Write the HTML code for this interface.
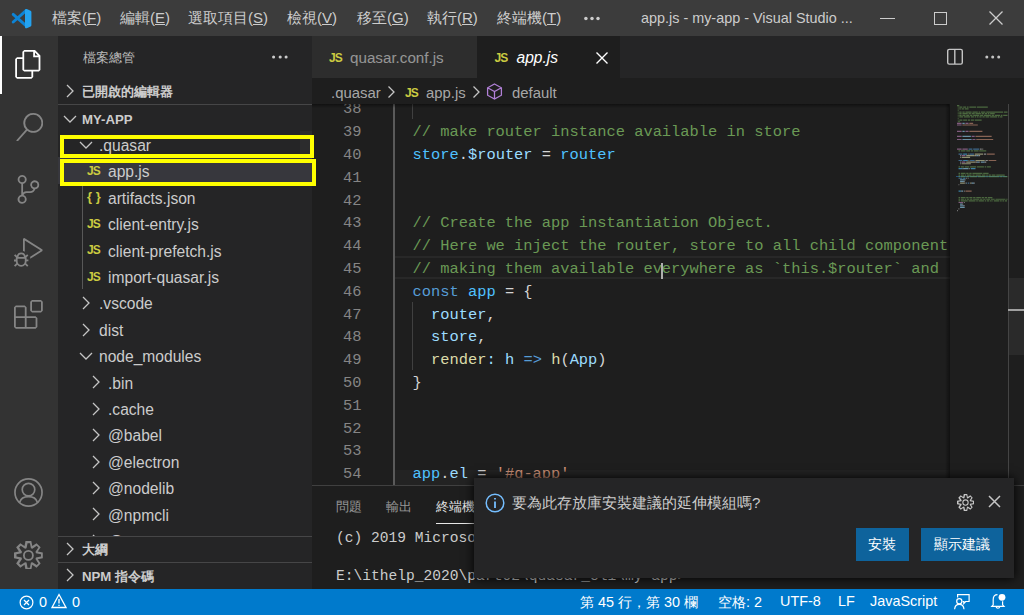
<!DOCTYPE html>
<html><head><meta charset="utf-8">
<style>
*{margin:0;padding:0;box-sizing:border-box}
html,body{width:1024px;height:615px;overflow:hidden;background:#1e1e1e;font-family:"Liberation Sans",sans-serif;}
.a{position:absolute;white-space:nowrap}
#title{left:0;top:0;width:1024px;height:36px;background:#3c3c3c;color:#cccccc;font-size:15px}
#title .m{position:absolute;top:9px}
#act{left:0;top:36px;width:58px;height:553px;background:#333333}
#act svg{position:absolute}
#side{left:58px;top:36px;width:254px;height:553px;background:#252526;color:#cccccc;font-size:15.6px;overflow:hidden}
.row{position:absolute;left:0;width:254px;height:26.4px}
.row.sel{background:#37373d}
.row .t{position:absolute;top:6.2px;white-space:nowrap}
.chev{fill:none;stroke:#c5c5c5;stroke-width:1.3}
.js{color:#cbcb41;font-weight:bold;font-size:12px;letter-spacing:-0.8px;font-family:"Liberation Sans",sans-serif}
.jsn{color:#cbcb41;font-weight:bold;font-size:13px}
.hdr{position:absolute;left:0;width:254px;height:26.4px;font-weight:bold;font-size:13.2px;color:#cccccc}
.hdr .t{position:absolute;top:7px;left:24px}
#tabs{left:312px;top:36px;width:712px;height:42px;background:#252526}
#crumb{left:312px;top:78px;width:712px;height:26.4px;background:#1e1e1e;color:#cccccccc;font-size:14.9px}
#editor{left:312px;top:104.4px;width:712px;height:380.6px;background:#1e1e1e;overflow:hidden;font-family:"Liberation Mono",monospace;font-size:15.4px}
.ln{position:absolute;left:0;width:49.5px;text-align:right;color:#858585;line-height:22.8px;height:22.8px}
.cl{position:absolute;left:100.5px;line-height:22.8px;height:22.8px;white-space:pre}
#panel{left:312px;top:484.5px;width:712px;height:104.5px;background:#1e1e1e;border-top:1px solid #80808059;overflow:hidden}
#status{left:0;top:588.6px;width:1024px;height:26.4px;background:#007acc;color:#fff;font-size:14.4px}
#notif{left:474px;top:477.5px;width:540px;height:100px;background:#252526;box-shadow:0 0 10px 0 #000000}
</style></head><body>

<div id="title" class="a">
  <svg class="a" style="left:0;top:0" width="36" height="36" viewBox="0 0 36 36">
    <path d="M13.2 14.4 L26 25.6 M13.2 22 L26 10.6" stroke="#0d84d6" stroke-width="2.9" stroke-linecap="round"/>
    <path d="M25 9.8 Q25.6 8.6 26.8 9 L30.6 10.8 Q31.4 11.2 31.4 12 V25.2 Q31.4 26 30.6 26.4 L26.8 28.2 Q25.6 28.6 25 27.4 Z" fill="#24a3f0"/>
  </svg>
  <div class="m" style="left:52px">檔案(<u>F</u>)</div>
  <div class="m" style="left:120px">編輯(<u>E</u>)</div>
  <div class="m" style="left:188px">選取項目(<u>S</u>)</div>
  <div class="m" style="left:287px">檢視(<u>V</u>)</div>
  <div class="m" style="left:357px">移至(<u>G</u>)</div>
  <div class="m" style="left:427px">執行(<u>R</u>)</div>
  <div class="m" style="left:497px">終端機(<u>T</u>)</div>
  <svg class="a" style="left:580px;top:12px" width="24" height="12" viewBox="0 0 24 12" fill="#cccccc"><circle cx="5.9" cy="6.5" r="1.75"/><circle cx="12" cy="6.5" r="1.75"/><circle cx="18" cy="6.5" r="1.75"/></svg>
  <div class="m" style="left:641px;font-size:14.4px;top:9.5px">app.js - my-app - Visual Studio ...</div>
  <div class="a" style="left:880px;top:17.5px;width:14.5px;height:1.2px;background:#ccc"></div>
  <div class="a" style="left:934px;top:11.5px;width:13px;height:13px;border:1.2px solid #ccc"></div>
  <svg class="a" style="left:988px;top:10px" width="16" height="16" viewBox="0 0 16 16"><path d="M1.5 1.5 L14.5 14.5 M14.5 1.5 L1.5 14.5" stroke="#ccc" stroke-width="1.3"/></svg>
</div>

<div id="act" class="a">
  <div class="a" style="left:0;top:0;width:2.4px;height:57.6px;background:#fff"></div>
  <svg style="left:14.4px;top:14.1px" width="28.8" height="28.8" viewBox="0 0 24 24"><path fill="#ffffff" d="M17.5 0h-9L7 1.5V6H2.5L1 7.5v15.07L2.5 24h12.07L16 22.57V18h4.7l1.3-1.43V4.5L17.5 0zm0 2.12l2.38 2.38H17.5V2.12zm-3 20.38h-12v-15H7v9.07L8.5 18h6v4.5zm6-6h-12v-15H16V6h4.5v10.5z"/></svg>
  <svg style="left:14.6px;top:76.6px" width="28.8" height="28.8" viewBox="0 0 24 24"><path fill="#858585" d="M15.25 0a8.25 8.25 0 0 0-6.18 13.72L1 22.88l1.12 1 8.05-9.12A8.251 8.251 0 1 0 15.25.01V0zm0 15a6.75 6.75 0 1 1 0-13.5 6.75 6.75 0 0 1 0 13.5z"/></svg>
  <svg style="left:14px;top:139.2px" width="28.8" height="28.8" viewBox="0 0 24 24"><path fill="#858585" d="M21.007 8.222A3.738 3.738 0 0 0 15.045 5.2a3.737 3.737 0 0 0 1.156 6.583 2.988 2.988 0 0 1-2.668 1.67h-2.99a4.456 4.456 0 0 0-2.989 1.165V7.4a3.737 3.737 0 1 0-1.494 0v9.117a3.776 3.776 0 1 0 1.816.099 2.99 2.99 0 0 1 2.668-1.667h2.99a4.484 4.484 0 0 0 4.223-3.039 3.736 3.736 0 0 0 3.25-3.687zM4.565 3.738a2.242 2.242 0 1 1 4.484 0 2.242 2.242 0 0 1-4.484 0zm4.484 16.441a2.242 2.242 0 1 1-4.484 0 2.242 2.242 0 0 1 4.484 0zm8.221-9.715a2.242 2.242 0 1 1 0-4.485 2.242 2.242 0 0 1 0 4.485z"/></svg>
  <svg style="left:14.1px;top:202.3px" width="28.8" height="28.8" viewBox="0 0 24 24"><path fill="#858585" d="M10.94 13.5l-1.32 1.32a3.73 3.73 0 0 0-7.24 0L1.06 13.5 0 14.56l1.72 1.72-.22.22V18H0v1.5h1.5v.08c.077.489.214.966.41 1.42L0 22.940 1.06 24l1.65-1.65A4.308 4.308 0 0 0 6 24a4.31 4.31 0 0 0 3.29-1.65L10.94 24 12 22.94 10.09 21c.198-.464.336-.951.41-1.45v-.1H12V18h-1.5v-1.5l-.22-.22L12 14.56l-1.06-1.06zM6 13.5a2.25 2.25 0 0 1 2.25 2.25h-4.5A2.25 2.25 0 0 1 6 13.5zm3 6a3.33 3.33 0 0 1-3 3 3.33 3.33 0 0 1-3-3v-2.25h6v2.25zm14.76-9.9v1.26L13.5 17.370V15.6l8.5-5.37L9 2v9.46a5.07 5.07 0 0 0-1.5-.72V.63L8.64 0l15.12 9.6z"/></svg>
  <svg style="left:14.1px;top:264.1px" width="28.8" height="28.8" viewBox="0 0 24 24"><path fill="#858585" d="M13.5 1.5L15 0h7.5L24 1.5V9l-1.5 1.5H15L13.5 9V1.5zm1.5 0V9h7.5V1.5H15zM0 15V6l1.5-1.5H9L10.5 6v7.5H18l1.5 1.5v7.5L18 24H1.5L0 22.5V15zm9-1.5V6H1.5v7.5H9zM9 15H1.5v7.5H9V15zm1.5 7.5H18V15h-7.5v7.5z"/></svg>
  <svg style="left:14.4px;top:442px" width="29" height="29" viewBox="0 0 24 24" fill="none" stroke="#858585" stroke-width="1.4"><circle cx="12" cy="12" r="11.2"/><circle cx="12" cy="9.6" r="5.2"/><path d="M4.6 20.2 C5.8 16.2 8.5 15.4 12 15.4 C15.5 15.4 18.2 16.2 19.4 20.2"/></svg>
  <svg style="left:14.4px;top:504.6px" width="28.8" height="28.8" viewBox="0 0 24 24"><path fill="#858585" d="M19.85 8.75l4.150.83v4.84l-4.15.83 2.35 3.52-3.43 3.43-3.52-2.35-.83 4.15H9.58l-.83-4.15-3.52 2.35-3.43-3.43 2.35-3.52L0 14.42V9.58l4.15-.83L1.8 5.23 5.23 1.8l3.52 2.35L9.58 0h4.84l.83 4.15 3.52-2.35 3.43 3.43-2.35 3.520zm-1.57 5.07l4.22-.84v-1.96l-4.22-.84-.37-1.23 2.4-3.6-1.38-1.38-3.6 2.4-1.23-.37-.84-4.22h-1.96l-.84 4.22-1.23.37-3.6-2.4-1.38 1.38 2.4 3.6-.37 1.23-4.22.84v1.96l4.22.84.37 1.23-2.4 3.6 1.38 1.38 3.6-2.4 1.23.37.84 4.22h1.96l.84-4.22 1.23-.37 3.6 2.4 1.38-1.38-2.4-3.6.37-1.23zM12 7.5a4.5 4.5 0 1 1 0 9 4.5 4.5 0 0 1 0-9zm0 1.5a3 3 0 1 0 0 6 3 3 0 0 0 0-6z"/></svg>
</div>

<div id="side" class="a">
  <div class="a" style="left:25px;top:13px;font-size:13.2px;color:#bbbbbb">檔案總管</div>
  <svg class="a" style="left:210px;top:15px" width="24" height="12" viewBox="0 0 24 12" fill="#cccccc"><circle cx="5.6" cy="6" r="1.55"/><circle cx="12.2" cy="6" r="1.55"/><circle cx="18.1" cy="6" r="1.55"/></svg>
  <div class="hdr" style="top:42px">
    <svg class="a" style="left:5px;top:6.2px" width="14" height="14" viewBox="0 0 14 14"><path class="chev" d="M4 1 L10 7 L4 13"/></svg>
    <span class="t" style="top:4.6px">已開啟的編輯器</span>
  </div>
  <div class="hdr" style="top:68.4px;border-top:1px solid #cccccc33">
    <svg class="a" style="left:5px;top:6.2px" width="14" height="14" viewBox="0 0 14 14"><path class="chev" d="M1 4 L7 10 L13 4"/></svg>
    <span class="t" style="top:6.5px">MY-APP</span>
  </div>
  <div class="a" style="left:23.7px;top:121.2px;width:1.3px;height:132px;background:#585858"></div>
  <div class="a" style="left:242px;top:95.2px;width:12px;height:26.4px;background:#2c2c2d"></div>
  <div class="row" style="top:94.8px">
<svg class="a" style="left:21.3px;top:7px" width="14" height="14" viewBox="0 0 14 14"><path class="chev" d="M1 4 L7 10 L13 4"/></svg>
<span class="t" style="left:41px">.quasar</span></div>
<div class="row sel" style="top:121.2px">
<div class="a js" style="left:29.0px;top:7px">JS</div>
<span class="t" style="left:50px">app.js</span></div>
<div class="row" style="top:147.6px">
<div class="a jsn" style="left:29.0px;top:5.5px">{ }</div>
<span class="t" style="left:50px">artifacts.json</span></div>
<div class="row" style="top:174.0px">
<div class="a js" style="left:29.0px;top:7px">JS</div>
<span class="t" style="left:50px">client-entry.js</span></div>
<div class="row" style="top:200.4px">
<div class="a js" style="left:29.0px;top:7px">JS</div>
<span class="t" style="left:50px">client-prefetch.js</span></div>
<div class="row" style="top:226.8px">
<div class="a js" style="left:29.0px;top:7px">JS</div>
<span class="t" style="left:50px">import-quasar.js</span></div>
<div class="row" style="top:253.2px">
<svg class="a" style="left:21.3px;top:7px" width="14" height="14" viewBox="0 0 14 14"><path class="chev" d="M4 1 L10 7 L4 13"/></svg>
<span class="t" style="left:41px">.vscode</span></div>
<div class="row" style="top:279.6px">
<svg class="a" style="left:21.3px;top:7px" width="14" height="14" viewBox="0 0 14 14"><path class="chev" d="M4 1 L10 7 L4 13"/></svg>
<span class="t" style="left:41px">dist</span></div>
<div class="row" style="top:306.0px">
<svg class="a" style="left:21.3px;top:7px" width="14" height="14" viewBox="0 0 14 14"><path class="chev" d="M1 4 L7 10 L13 4"/></svg>
<span class="t" style="left:41px">node_modules</span></div>
<div class="row" style="top:332.4px">
<svg class="a" style="left:31.0px;top:7px" width="14" height="14" viewBox="0 0 14 14"><path class="chev" d="M4 1 L10 7 L4 13"/></svg>
<span class="t" style="left:50px">.bin</span></div>
<div class="row" style="top:358.8px">
<svg class="a" style="left:31.0px;top:7px" width="14" height="14" viewBox="0 0 14 14"><path class="chev" d="M4 1 L10 7 L4 13"/></svg>
<span class="t" style="left:50px">.cache</span></div>
<div class="row" style="top:385.2px">
<svg class="a" style="left:31.0px;top:7px" width="14" height="14" viewBox="0 0 14 14"><path class="chev" d="M4 1 L10 7 L4 13"/></svg>
<span class="t" style="left:50px">@babel</span></div>
<div class="row" style="top:411.6px">
<svg class="a" style="left:31.0px;top:7px" width="14" height="14" viewBox="0 0 14 14"><path class="chev" d="M4 1 L10 7 L4 13"/></svg>
<span class="t" style="left:50px">@electron</span></div>
<div class="row" style="top:438.0px">
<svg class="a" style="left:31.0px;top:7px" width="14" height="14" viewBox="0 0 14 14"><path class="chev" d="M4 1 L10 7 L4 13"/></svg>
<span class="t" style="left:50px">@nodelib</span></div>
<div class="row" style="top:464.4px">
<svg class="a" style="left:31.0px;top:7px" width="14" height="14" viewBox="0 0 14 14"><path class="chev" d="M4 1 L10 7 L4 13"/></svg>
<span class="t" style="left:50px">@npmcli</span></div>
<div class="row" style="top:490.8px">
<svg class="a" style="left:31.0px;top:7px" width="14" height="14" viewBox="0 0 14 14"><path class="chev" d="M4 1 L10 7 L4 13"/></svg>
<span class="t" style="left:50px">@types</span></div>
  <div class="hdr" style="top:499.8px;border-top:1px solid #cccccc33;background:#252526">
    <svg class="a" style="left:5px;top:5.2px" width="14" height="14" viewBox="0 0 14 14"><path class="chev" d="M4 1 L10 7 L4 13"/></svg>
    <span class="t" style="top:4.3px">大綱</span>
  </div>
  <div class="hdr" style="top:526.2px;border-top:1px solid #cccccc33;background:#252526">
    <svg class="a" style="left:5px;top:5.2px" width="14" height="14" viewBox="0 0 14 14"><path class="chev" d="M4 1 L10 7 L4 13"/></svg>
    <span class="t" style="top:4.6px">NPM 指令碼</span>
  </div>
</div>

<div id="tabs" class="a">
  <div class="a" style="left:0;top:0;width:164.5px;height:42px;background:#2d2d2d">
    <div class="a js" style="left:17px;top:15px">JS</div>
    <div class="a" style="left:38px;top:13px;font-size:15.2px;color:#ffffff80">quasar.conf.js</div>
  </div>
  <div class="a" style="left:164.5px;top:0;width:143.5px;height:42px;background:#1e1e1e">
    <div class="a js" style="left:18px;top:15px">JS</div>
    <div class="a" style="left:40px;top:13px;font-size:15.6px;color:#fff;font-style:italic">app.js</div>
    <svg class="a" style="left:118px;top:15px" width="14" height="14" viewBox="0 0 14 14"><path d="M1.5 1.5 L12.5 12.5 M12.5 1.5 L1.5 12.5" stroke="#fff" stroke-width="1.4"/></svg>
  </div>
  <svg class="a" style="left:634px;top:11.5px" width="18" height="18" viewBox="0 0 18 18" fill="none" stroke="#c5c5c5" stroke-width="1.4"><rect x="1.7" y="1.4" width="14.6" height="14.7" rx="1.6"/><path d="M8.8 1.4 V16"/></svg>
  <svg class="a" style="left:668px;top:15px" width="24" height="12" viewBox="0 0 24 12" fill="#c5c5c5"><circle cx="6.8" cy="6" r="1.5"/><circle cx="12.7" cy="6" r="1.5"/><circle cx="18.7" cy="6" r="1.5"/></svg>
</div>

<div id="crumb" class="a">
  <span class="a" style="left:19px;top:6.5px">.quasar</span>
  <svg class="a" style="left:75px;top:6.5px" width="9" height="14" viewBox="0 0 9 14"><path class="chev" d="M1.5 1.5 L7 7 L1.5 12.5"/></svg>
  <div class="a js" style="left:93px;top:8px">JS</div>
  <span class="a" style="left:114px;top:6.5px">app.js</span>
  <svg class="a" style="left:160px;top:6.5px" width="9" height="14" viewBox="0 0 9 14"><path class="chev" d="M1.5 1.5 L7 7 L1.5 12.5"/></svg>
  <svg class="a" style="left:174px;top:4.5px" width="17" height="17" viewBox="0 0 16 16" fill="none" stroke="#b180d7" stroke-width="1.2"><path d="M8 1 L14.5 4.5 V11.5 L8 15 L1.5 11.5 V4.5 Z M1.5 4.5 L8 8 L14.5 4.5 M8 8 V15"/></svg>
  <span class="a" style="left:200px;top:6.5px">default</span>
</div>

<div id="editor" class="a">
  <div class="a" style="left:83px;top:366px;width:555px;height:15px;background:#232323"></div>
  <div class="a" style="left:81px;top:0;width:2.4px;height:381px;background:#5a5a5a"></div>
  <div class="a" style="left:100px;top:0;width:1.2px;height:14.8px;background:#404040"></div>
  <div class="a" style="left:100px;top:197.2px;width:1.2px;height:68.4px;background:#404040"></div>
  <div class="a" style="left:83px;top:151.8px;width:555px;height:22.8px;border-top:2.4px solid #282828;border-bottom:2.4px solid #282828"></div>
  <div class="a" style="left:0;top:0;width:637px;height:381px;overflow:hidden">
<div class="ln" style="top:-6.0px">38</div>
<div class="ln" style="top:16.8px">39</div>
<div class="cl" style="top:16.8px"><span style="color:#6a9955">// make router instance available in store</span></div>
<div class="ln" style="top:39.6px">40</div>
<div class="cl" style="top:39.6px"><span style="color:#4fc1ff">store</span><span style="color:#d4d4d4">.</span><span style="color:#9cdcfe">$router</span><span style="color:#d4d4d4"> = </span><span style="color:#4fc1ff">router</span></div>
<div class="ln" style="top:62.4px">41</div>
<div class="ln" style="top:85.2px">42</div>
<div class="ln" style="top:108.0px">43</div>
<div class="cl" style="top:108.0px"><span style="color:#6a9955">// Create the app instantiation Object.</span></div>
<div class="ln" style="top:130.8px">44</div>
<div class="cl" style="top:130.8px"><span style="color:#6a9955">// Here we inject the router, store to all child components,</span></div>
<div class="ln" style="top:153.6px">45</div>
<div class="cl" style="top:153.6px"><span style="color:#6a9955">// making them available everywhere as `this.$router` and `this.$store`.</span></div>
<div class="ln" style="top:176.4px">46</div>
<div class="cl" style="top:176.4px"><span style="color:#569cd6">const</span><span style="color:#d4d4d4"> </span><span style="color:#4fc1ff">app</span><span style="color:#d4d4d4"> = {</span></div>
<div class="ln" style="top:199.2px">47</div>
<div class="cl" style="top:199.2px"><span style="color:#d4d4d4">  </span><span style="color:#9cdcfe">router</span><span style="color:#d4d4d4">,</span></div>
<div class="ln" style="top:222.0px">48</div>
<div class="cl" style="top:222.0px"><span style="color:#d4d4d4">  </span><span style="color:#9cdcfe">store</span><span style="color:#d4d4d4">,</span></div>
<div class="ln" style="top:244.8px">49</div>
<div class="cl" style="top:244.8px"><span style="color:#d4d4d4">  </span><span style="color:#dcdcaa">render</span><span style="color:#9cdcfe">: </span><span style="color:#9cdcfe">h</span><span style="color:#d4d4d4"> </span><span style="color:#569cd6">=&gt;</span><span style="color:#d4d4d4"> </span><span style="color:#dcdcaa">h</span><span style="color:#d4d4d4">(</span><span style="color:#9cdcfe">App</span><span style="color:#d4d4d4">)</span></div>
<div class="ln" style="top:267.6px">50</div>
<div class="cl" style="top:267.6px"><span style="color:#d4d4d4">}</span></div>
<div class="ln" style="top:290.4px">51</div>
<div class="ln" style="top:313.2px">52</div>
<div class="ln" style="top:336.0px">53</div>
<div class="ln" style="top:358.8px">54</div>
<div class="cl" style="top:358.8px"><span style="color:#4fc1ff">app</span><span style="color:#d4d4d4">.</span><span style="color:#9cdcfe">el</span><span style="color:#d4d4d4"> = </span><span style="color:#ce9178">'#q-app'</span></div>
<div class="ln" style="top:381.6px">55</div>
  </div>
  <div class="a" style="left:349px;top:158.6px;width:2.4px;height:16px;background:#aeafad"></div>
  <div class="a" style="left:633px;top:0;width:4.5px;height:381px;background:linear-gradient(to right,rgba(0,0,0,0),rgba(0,0,0,.45))"></div>
  <div class="a" style="left:696px;top:174px;width:16px;height:77px;background:#2a2a2a"></div>
  <div class="a" style="left:695.5px;top:0;width:1.2px;height:381px;background:#444444"></div>
  <div class="a" style="left:696px;top:204.5px;width:16px;height:2.4px;background:#a0a0a0"></div>
  <div class="a" style="left:644px;top:71.2px;width:51px;height:1.8px;background:#264f78"></div>
<svg class="a" style="left:645.3px;top:0.9px" width="51" height="110" viewBox="0 0 51 110" opacity="0.6"><path fill="#6a9955" d="M0.00 0.00h2.31v1.2h-2.31zM0.77 1.61h0.77v1.2h-0.77zM2.31 1.61h3.08v1.2h-3.08zM6.16 1.61h3.08v1.2h-3.08zM10.01 1.61h1.54v1.2h-1.54zM12.32 1.61h6.93v1.2h-6.93zM20.02 1.61h10.78v1.2h-10.78zM0.77 3.23h0.77v1.2h-0.77zM2.31 3.23h1.54v1.2h-1.54zM4.62 3.23h2.31v1.2h-2.31zM7.70 3.23h3.85v1.2h-3.85zM0.77 4.84h0.77v1.2h-0.77zM0.77 6.46h0.77v1.2h-0.77zM2.31 6.46h2.31v1.2h-2.31zM5.39 6.46h2.31v1.2h-2.31zM8.47 6.46h6.16v1.2h-6.16zM15.40 6.46h5.39v1.2h-5.39zM21.56 6.46h1.54v1.2h-1.54zM23.87 6.46h4.62v1.2h-4.62zM29.26 6.46h16.94v1.2h-16.94zM46.97 6.46h3.53v1.2h-3.53zM0.77 8.07h0.77v1.2h-0.77zM2.31 8.07h2.31v1.2h-2.31zM5.39 8.07h5.39v1.2h-5.39zM11.55 8.07h2.31v1.2h-2.31zM14.63 8.07h3.08v1.2h-3.08zM18.48 8.07h5.39v1.2h-5.39zM24.64 8.07h2.31v1.2h-2.31zM27.72 8.07h2.31v1.2h-2.31zM30.80 8.07h1.54v1.2h-1.54zM33.11 8.07h4.62v1.2h-4.62zM0.77 9.69h0.77v1.2h-0.77zM2.31 9.69h2.31v1.2h-2.31zM5.39 9.69h3.08v1.2h-3.08zM9.24 9.69h3.08v1.2h-3.08zM13.09 9.69h2.31v1.2h-2.31zM16.17 9.69h6.16v1.2h-6.16zM23.10 9.69h3.08v1.2h-3.08zM26.95 9.69h6.93v1.2h-6.93zM34.65 9.69h2.31v1.2h-2.31zM37.73 9.69h5.39v1.2h-5.39zM43.89 9.69h1.54v1.2h-1.54zM46.20 9.69h4.30v1.2h-4.30zM0.77 11.30h0.77v1.2h-0.77zM2.31 11.30h3.85v1.2h-3.85zM6.93 11.30h6.16v1.2h-6.16zM13.86 11.30h3.08v1.2h-3.08zM17.71 11.30h1.54v1.2h-1.54zM20.02 11.30h1.54v1.2h-1.54zM22.33 11.30h2.31v1.2h-2.31zM25.41 11.30h2.31v1.2h-2.31zM28.49 11.30h3.85v1.2h-3.85zM33.11 11.30h6.93v1.2h-6.93zM40.81 11.30h1.54v1.2h-1.54zM43.12 11.30h2.31v1.2h-2.31zM0.77 12.92h0.77v1.2h-0.77zM0.77 14.54h0.77v1.2h-0.77zM2.31 14.54h3.08v1.2h-3.08zM6.16 14.54h3.85v1.2h-3.85zM10.78 14.54h2.31v1.2h-2.31zM13.86 14.54h3.08v1.2h-3.08zM17.71 14.54h6.93v1.2h-6.93zM0.77 16.15h2.31v1.2h-2.31zM1.54 45.22h1.54v1.2h-1.54zM3.85 45.22h4.62v1.2h-4.62zM9.24 45.22h3.85v1.2h-3.85zM13.86 45.22h2.31v1.2h-2.31zM16.94 45.22h4.62v1.2h-4.62zM22.33 45.22h6.93v1.2h-6.93zM1.54 61.37h1.54v1.2h-1.54zM3.85 61.37h3.08v1.2h-3.08zM7.70 61.37h4.62v1.2h-4.62zM13.09 61.37h6.16v1.2h-6.16zM20.02 61.37h6.93v1.2h-6.93zM27.72 61.37h1.54v1.2h-1.54zM30.03 61.37h3.85v1.2h-3.85zM1.54 67.83h1.54v1.2h-1.54zM3.85 67.83h4.62v1.2h-4.62zM9.24 67.83h2.31v1.2h-2.31zM12.32 67.83h2.31v1.2h-2.31zM15.40 67.83h10.01v1.2h-10.01zM26.18 67.83h5.39v1.2h-5.39zM1.54 69.44h1.54v1.2h-1.54zM3.85 69.44h3.08v1.2h-3.08zM7.70 69.44h1.54v1.2h-1.54zM10.01 69.44h4.62v1.2h-4.62zM15.40 69.44h2.31v1.2h-2.31zM18.48 69.44h5.39v1.2h-5.39zM24.64 69.44h3.85v1.2h-3.85zM29.26 69.44h1.54v1.2h-1.54zM31.57 69.44h2.31v1.2h-2.31zM34.65 69.44h3.85v1.2h-3.85zM39.27 69.44h8.47v1.2h-8.47zM1.54 71.06h1.54v1.2h-1.54zM3.85 71.06h4.62v1.2h-4.62zM9.24 71.06h3.08v1.2h-3.08zM13.09 71.06h6.93v1.2h-6.93zM20.79 71.06h7.70v1.2h-7.70zM29.26 71.06h1.54v1.2h-1.54zM31.57 71.06h10.78v1.2h-10.78zM43.12 71.06h2.31v1.2h-2.31zM46.20 71.06h4.30v1.2h-4.30zM1.54 92.05h1.54v1.2h-1.54zM3.85 92.05h4.62v1.2h-4.62zM9.24 92.05h2.31v1.2h-2.31zM12.32 92.05h3.08v1.2h-3.08zM16.17 92.05h2.31v1.2h-2.31zM19.25 92.05h4.62v1.2h-4.62zM24.64 92.05h2.31v1.2h-2.31zM27.72 92.05h2.31v1.2h-2.31zM30.80 92.05h4.62v1.2h-4.62zM1.54 93.67h1.54v1.2h-1.54zM3.85 93.67h3.08v1.2h-3.08zM7.70 93.67h1.54v1.2h-1.54zM10.01 93.67h2.31v1.2h-2.31zM13.09 93.67h2.31v1.2h-2.31zM16.17 93.67h6.16v1.2h-6.16zM23.10 93.67h2.31v1.2h-2.31zM26.18 93.67h2.31v1.2h-2.31zM29.26 93.67h3.85v1.2h-3.85zM33.88 93.67h3.85v1.2h-3.85zM38.50 93.67h10.01v1.2h-10.01zM49.28 93.67h1.22v1.2h-1.22zM1.54 95.28h1.54v1.2h-1.54zM3.85 95.28h6.93v1.2h-6.93zM11.55 95.28h6.93v1.2h-6.93zM19.25 95.28h1.54v1.2h-1.54zM21.56 95.28h5.39v1.2h-5.39zM27.72 95.28h1.54v1.2h-1.54zM30.03 95.28h2.31v1.2h-2.31zM33.11 95.28h1.54v1.2h-1.54zM35.42 95.28h0.77v1.2h-0.77zM36.96 95.28h5.39v1.2h-5.39zM43.12 95.28h1.54v1.2h-1.54zM45.43 95.28h1.54v1.2h-1.54zM47.74 95.28h2.31v1.2h-2.31z"/><path fill="#c586c0" d="M0.00 17.77h4.62v1.2h-4.62zM8.47 17.77h3.08v1.2h-3.08zM0.00 19.38h4.62v1.2h-4.62zM0.00 25.84h4.62v1.2h-4.62zM8.47 25.84h3.08v1.2h-3.08zM0.00 30.68h4.62v1.2h-4.62zM14.63 30.68h3.08v1.2h-3.08zM0.00 33.91h4.62v1.2h-4.62zM15.40 33.91h3.08v1.2h-3.08zM0.00 43.60h4.62v1.2h-4.62zM5.39 43.60h5.39v1.2h-5.39zM4.62 50.06h3.85v1.2h-3.85zM4.62 56.52h3.85v1.2h-3.85zM1.54 96.90h4.62v1.2h-4.62z"/><path fill="#9cdcfe" d="M5.39 17.77h2.31v1.2h-2.31zM5.39 25.84h2.31v1.2h-2.31zM5.39 30.68h8.47v1.2h-8.47zM5.39 33.91h9.24v1.2h-9.24zM19.25 50.06h2.31v1.2h-2.31zM20.02 56.52h2.31v1.2h-2.31zM23.87 56.52h3.85v1.2h-3.85zM6.16 62.98h5.39v1.2h-5.39zM3.08 74.29h4.62v1.2h-4.62zM3.08 75.91h3.85v1.2h-3.85zM9.24 77.52h0.77v1.2h-0.77zM14.63 77.52h2.31v1.2h-2.31zM4.62 85.59h1.54v1.2h-1.54zM3.08 98.52h2.31v1.2h-2.31zM3.08 100.13h3.85v1.2h-3.85zM3.08 101.75h4.62v1.2h-4.62z"/><path fill="#ce9178" d="M12.32 17.77h3.85v1.2h-3.85zM5.39 19.38h15.40v1.2h-15.40zM12.32 25.84h13.09v1.2h-13.09zM18.48 30.68h16.17v1.2h-16.17zM19.25 33.91h16.94v1.2h-16.94zM30.03 48.45h7.70v1.2h-7.70zM31.57 54.91h7.70v1.2h-7.70zM8.47 85.59h6.16v1.2h-6.16z"/><path fill="#569cd6" d="M11.55 43.60h3.85v1.2h-3.85zM16.17 43.60h6.16v1.2h-6.16zM1.54 48.45h3.85v1.2h-3.85zM12.32 48.45h4.62v1.2h-4.62zM1.54 54.91h3.85v1.2h-3.85zM13.09 54.91h4.62v1.2h-4.62zM1.54 72.67h3.85v1.2h-3.85zM10.78 77.52h1.54v1.2h-1.54z"/><path fill="#d4d4d4" d="M23.10 43.60h1.54v1.2h-1.54zM25.41 43.60h0.77v1.2h-0.77zM10.78 48.45h0.77v1.2h-0.77zM26.95 48.45h2.31v1.2h-2.31zM3.08 50.06h0.77v1.2h-0.77zM17.71 50.06h1.54v1.2h-1.54zM21.56 50.06h1.54v1.2h-1.54zM3.08 51.68h0.77v1.2h-0.77zM11.55 54.91h0.77v1.2h-0.77zM28.49 54.91h2.31v1.2h-2.31zM3.08 56.52h0.77v1.2h-0.77zM18.48 56.52h1.54v1.2h-1.54zM22.33 56.52h0.77v1.2h-0.77zM27.72 56.52h1.54v1.2h-1.54zM3.08 58.14h0.77v1.2h-0.77zM5.39 62.98h0.77v1.2h-0.77zM12.32 62.98h0.77v1.2h-0.77zM9.24 72.67h0.77v1.2h-0.77zM10.78 72.67h0.77v1.2h-0.77zM7.70 74.29h0.77v1.2h-0.77zM6.93 75.91h0.77v1.2h-0.77zM7.70 77.52h0.77v1.2h-0.77zM13.86 77.52h0.77v1.2h-0.77zM16.94 77.52h0.77v1.2h-0.77zM1.54 79.14h0.77v1.2h-0.77zM3.85 85.59h0.77v1.2h-0.77zM6.93 85.59h0.77v1.2h-0.77zM6.93 96.90h0.77v1.2h-0.77zM5.39 98.52h0.77v1.2h-0.77zM6.93 100.13h0.77v1.2h-0.77zM1.54 103.36h0.77v1.2h-0.77zM0.00 104.97h0.77v1.2h-0.77z"/><path fill="#4fc1ff" d="M6.16 48.45h3.85v1.2h-3.85zM6.16 54.91h4.62v1.2h-4.62zM1.54 62.98h3.85v1.2h-3.85zM13.86 62.98h4.62v1.2h-4.62zM6.16 72.67h2.31v1.2h-2.31zM1.54 85.59h2.31v1.2h-2.31z"/><path fill="#dcdcaa" d="M17.71 48.45h8.47v1.2h-8.47zM9.24 50.06h8.47v1.2h-8.47zM4.62 51.68h8.47v1.2h-8.47zM18.48 54.91h9.24v1.2h-9.24zM9.24 56.52h9.24v1.2h-9.24zM4.62 58.14h9.24v1.2h-9.24zM3.08 77.52h4.62v1.2h-4.62zM13.09 77.52h0.77v1.2h-0.77z"/></svg>
  <div class="a" style="left:0;top:0;width:637px;height:4px;background:linear-gradient(to bottom,rgba(0,0,0,.45),rgba(0,0,0,0))"></div>
</div>

<div id="panel" class="a">
  <span class="a" style="left:24px;top:12px;font-size:13.2px;color:#e7e7e799">問題</span>
  <span class="a" style="left:74px;top:12px;font-size:13.2px;color:#e7e7e799">輸出</span>
  <span class="a" style="left:124px;top:12px;font-size:13.2px;color:#e7e7e7">終端機</span>
  <div class="a" style="left:124px;top:37px;width:40px;height:1.2px;background:#e7e7e7"></div>
  <div class="a" style="left:24px;top:41px;font-family:'Liberation Mono',monospace;font-size:14.6px;color:#cccccc;line-height:22.8px">(c) 2019 Microsoft Corporation. All rights reserved.</div>
  <div class="a" style="left:24px;top:79px;font-family:'Liberation Mono',monospace;font-size:14.6px;color:#cccccc;line-height:22.8px">E:\ithelp_2020\part02\quasar_cli\my-app&gt;</div>
</div>

<div id="notif" class="a">
  <svg class="a" style="left:11px;top:15px" width="20" height="20" viewBox="0 0 20 20" fill="none" stroke="#75beff" stroke-width="1.5"><circle cx="10" cy="10" r="8.8"/><path d="M10 8.5 V15 M10 5 V6.5" stroke-width="1.8"/></svg>
  <span class="a" style="left:38px;top:15.5px;font-size:15.1px;color:#cccccc">要為此存放庫安裝建議的延伸模組嗎?</span>
  <svg class="a" style="left:482.5px;top:16px" width="17" height="17" viewBox="0 0 24 24"><path fill="#c5c5c5" d="M19.85 8.75l4.150.83v4.84l-4.15.83 2.35 3.52-3.43 3.43-3.52-2.35-.83 4.15H9.58l-.83-4.15-3.52 2.35-3.43-3.43 2.35-3.52L0 14.42V9.58l4.15-.83L1.8 5.23 5.23 1.8l3.52 2.35L9.58 0h4.84l.83 4.15 3.52-2.35 3.43 3.43-2.35 3.520zm-1.57 5.07l4.22-.84v-1.96l-4.22-.84-.37-1.230 2.4-3.6-1.38-1.38-3.6 2.4-1.23-.37-.84-4.22h-1.96l-.84 4.22-1.23.37-3.6-2.4-1.38 1.38 2.4 3.6-.37 1.23-4.22.84v1.96l4.22.84.37 1.23-2.4 3.6 1.38 1.38 3.6-2.4 1.23.37.84 4.22h1.96l.84-4.22 1.23-.37 3.6 2.4 1.38-1.38-2.4-3.6.37-1.23zM12 7.5a4.5 4.5 0 1 1 0 9 4.5 4.5 0 0 1 0-9zm0 1.5a3 3 0 1 0 0 6 3 3 0 0 0 0-6z"/></svg>
  <svg class="a" style="left:513.5px;top:17px" width="13" height="13" viewBox="0 0 13 13"><path d="M1 1 L12 12 M12 1 L1 12" stroke="#c5c5c5" stroke-width="1.5"/></svg>
  <div class="a" style="left:381.5px;top:50.5px;width:53px;height:33px;background:#0e639c;color:#fff;font-size:14.4px;text-align:center;line-height:32px">安裝</div>
  <div class="a" style="left:446.5px;top:50.5px;width:82px;height:33px;background:#0e639c;color:#fff;font-size:14.4px;text-align:center;line-height:32px">顯示建議</div>
</div>

<div id="status" class="a">
  <svg class="a" style="left:19px;top:6px" width="15" height="15" viewBox="0 0 16 16" fill="none" stroke="#fff" stroke-width="1.3"><circle cx="8" cy="8" r="6.8"/><path d="M5.3 5.3 L10.7 10.7 M10.7 5.3 L5.3 10.7"/></svg>
  <span class="a" style="left:39px;top:5px">0</span>
  <svg class="a" style="left:51px;top:4.2px" width="16" height="16" viewBox="0 0 16 16" fill="none" stroke="#fff" stroke-width="1.3"><path d="M8 1.5 L15 14.5 H1 Z M8 6 V10.5 M8 11.8 V13"/></svg>
  <span class="a" style="left:72px;top:5px">0</span>
  <span class="a" style="left:580px;top:4px">第 45 行，第 30 欄</span>
  <span class="a" style="left:718px;top:4px">空格: 2</span>
  <span class="a" style="left:780px;top:4px">UTF-8</span>
  <span class="a" style="left:838px;top:4px">LF</span>
  <span class="a" style="left:870px;top:4px">JavaScript</span>
  <svg class="a" style="left:950px;top:1.4px" width="60" height="25" viewBox="0 0 60 25" fill="none" stroke="#fff" stroke-width="1.2">
    <path d="M7.6 7.6 V4.6 H19.1 V11.5 H15.6 L13.8 13.4 V11.5 H12.6"/>
    <circle cx="9.3" cy="11.2" r="2.6"/>
    <path d="M4.6 19.2 C4.9 15.8 6.9 14.3 9.3 14.3 C11.7 14.3 13.7 15.8 14 19.2"/>
    <path d="M47.5 4.6 C44.8 4.6 43.2 6.8 43.2 9.6 V14.8 L41.8 16.3 H54 L52.6 14.8 V11.2"/>
    <path d="M46.2 17 C46.4 18.6 49.4 18.6 49.6 17"/>
    <circle cx="52" cy="7.3" r="3.4" fill="#fff" stroke="none"/>
  </svg>
</div>

<div class="a" style="left:60px;top:134.5px;width:254px;height:23.5px;border:4.4px solid #ffff00"></div>
<div class="a" style="left:60px;top:159.2px;width:256.4px;height:26.7px;border:4.4px solid #ffff00"></div>
</body></html>
